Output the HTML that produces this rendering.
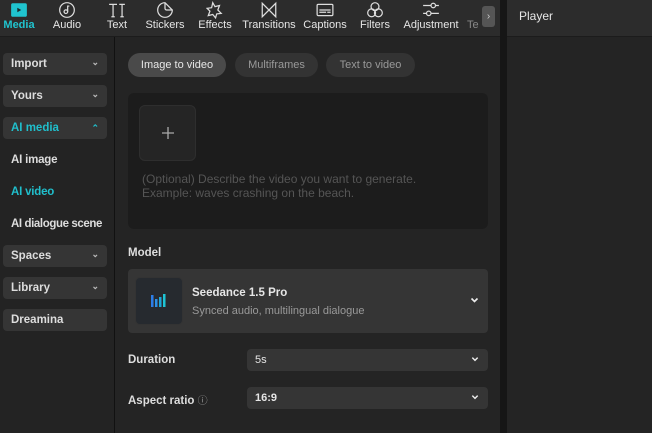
<!DOCTYPE html>
<html><head><style>
*{margin:0;padding:0;box-sizing:border-box}
body{width:652px;height:433px;background:#242424;font-family:"Liberation Sans",sans-serif;position:relative;overflow:hidden;color:#ddd}
.a{position:absolute}
.top{left:0;top:0;width:500px;height:37px;background:#2c2c2c;border-bottom:1px solid #1c1c1c}
.tab{position:absolute;top:0;width:60px;text-align:center;font-size:11px;color:#e6e6e6}
.tab svg{display:block;margin:1px auto 0;width:18px;height:18px}
.tab span{display:block;margin-top:0}
.side{left:0;top:37px;width:115px;height:396px;background:#232323;border-right:1px solid #111}
.sb{position:absolute;left:3px;width:104px;height:22px;background:#353535;border-radius:4px;font-size:11.5px;font-weight:bold;color:#ddd;padding:5px 0 0 8px}
.sb i{position:absolute;right:8px;top:4px;font-style:normal;font-size:9px;color:#bbb}
.st{position:absolute;left:11px;font-size:11.5px;font-weight:bold;color:#ddd;letter-spacing:-0.2px}
.pill{position:absolute;top:53px;height:24px;border-radius:12px;background:#333;font-size:11px;color:#999;text-align:center;line-height:24px}
.sel{position:absolute;left:247px;width:241px;height:22px;background:#353535;border-radius:4px;font-size:11px;color:#e6e6e6;padding:5px 0 0 8px}
.chev{position:absolute;right:9px;top:6px;width:8px;height:8px}
.lbl{position:absolute;left:128px;font-size:11.5px;font-weight:bold;color:#ddd}
</style></head><body>
<div class="a top">
 <div class="tab" style="left:-11px;color:#20c4cf"><svg viewBox="0 0 16 16"><rect x="1" y="2" width="14" height="12" rx="1.5" fill="#20c4cf"/><path d="M6.5 6v4l3.5-2z" fill="#1a2a2c"/></svg><span style="font-weight:bold">Media</span></div>
 <div class="tab" style="left:37px"><svg viewBox="0 0 16 16" fill="none" stroke="#ddd" stroke-width="1.1"><circle cx="8" cy="8" r="6.5"/><circle cx="7" cy="9.5" r="1.6"/><path d="M8.6 9.5V4.5h1.5"/></svg><span>Audio</span></div>
 <div class="tab" style="left:87px"><svg viewBox="0 0 16 16" fill="none" stroke="#ddd" stroke-width="1.1"><path d="M1 3h7M4.5 3v11M3 14h3M10 3h5M12.5 3v11M11 14h3"/></svg><span>Text</span></div>
 <div class="tab" style="left:135px"><svg viewBox="0 0 16 16" fill="none" stroke="#ddd" stroke-width="1.1"><path d="M8 1.5a6.5 6.5 0 1 0 6.5 6.5L8 1.5zM8 1.5v5a1.5 1.5 0 0 0 1.5 1.5h5"/></svg><span>Stickers</span></div>
 <div class="tab" style="left:185px"><svg viewBox="0 0 16 16" fill="none" stroke="#ddd" stroke-width="1.1"><path d="M6 1.5l2 3.5 4-1-1.5 4 3 3-4 .5-1 3.5-2.5-3-4 1 1.5-4L1 6.5l4-.5z"/></svg><span>Effects</span></div>
 <div class="tab" style="left:239px"><svg viewBox="0 0 16 16" fill="none" stroke="#ddd" stroke-width="1.1"><path d="M2 2v12l6-6zM14 2v12L8 8z"/></svg><span>Transitions</span></div>
 <div class="tab" style="left:295px"><svg viewBox="0 0 16 16" fill="none" stroke="#ddd" stroke-width="1.1"><rect x="1" y="3" width="14" height="10" rx="1"/><path d="M3 10h6M10 10h3M3 8h10"/></svg><span>Captions</span></div>
 <div class="tab" style="left:345px"><svg viewBox="0 0 16 16" fill="none" stroke="#ddd" stroke-width="1.1"><circle cx="8" cy="5" r="3.5"/><circle cx="5" cy="10.5" r="3.5"/><circle cx="11" cy="10.5" r="3.5"/></svg><span>Filters</span></div>
 <div class="tab" style="left:401px"><svg viewBox="0 0 16 16" fill="none" stroke="#ddd" stroke-width="1.1"><path d="M1 4h7M12 4h3M1 11h3M8 11h7"/><circle cx="10" cy="4" r="2"/><circle cx="6" cy="11" r="2"/></svg><span>Adjustment</span></div>
 <div class="a" style="left:467px;top:19px;font-size:11px;color:#888">Te</div>
 <div class="a" style="left:482px;top:6px;width:13px;height:21px;background:#555;border-radius:3px;color:#ccc;font-size:10px;text-align:center;line-height:21px">›</div>
</div>
<div class="a" style="left:500px;top:0;width:7px;height:433px;background:#161616"></div>
<div class="a" style="left:507px;top:0;width:145px;height:37px;background:#2c2c2c;border-bottom:1px solid #1c1c1c"><div class="a" style="left:12px;top:9px;font-size:12px;color:#e6e6e6">Player</div></div>
<div class="a side"></div>
<div class="sb" style="top:53px">Import<i>⌄</i></div>
<div class="sb" style="top:85px">Yours<i>⌄</i></div>
<div class="sb" style="top:117px;color:#20bfcc">AI media<i style="color:#20bfcc;top:6px">⌃</i></div>
<div class="st" style="top:154px">AI image</div>
<div class="st" style="top:186px;color:#20bfcc">AI video</div>
<div class="st" style="top:218px;letter-spacing:-0.4px">AI dialogue scene</div>
<div class="sb" style="top:245px">Spaces<i>⌄</i></div>
<div class="sb" style="top:277px">Library<i>⌄</i></div>
<div class="sb" style="top:309px">Dreamina</div>

<div class="pill" style="left:128px;width:98px;background:#4a4a4a;color:#e6e6e6">Image to video</div>
<div class="pill" style="left:235px;width:83px">Multiframes</div>
<div class="pill" style="left:326px;width:89px">Text to video</div>
<div class="a" style="left:128px;top:93px;width:360px;height:136px;background:#1c1c1c;border-radius:6px"></div>
<div class="a" style="left:139px;top:105px;width:57px;height:56px;background:#252525;border:1px solid #2e2e2e;border-radius:6px">
<svg class="a" style="left:21px;top:20px" width="14" height="14" viewBox="0 0 14 14"><path d="M7 1v12M1 7h12" stroke="#aaa" stroke-width="1.3"/></svg></div>
<div class="a" style="left:142px;top:172px;font-size:12px;color:#555;line-height:14px">(Optional) Describe the video you want to generate.<br>Example: waves crashing on the beach.</div>
<div class="lbl" style="top:247px">Model</div>
<div class="a" style="left:128px;top:269px;width:360px;height:64px;background:#353535;border-radius:4px"></div>
<div class="a" style="left:135px;top:277px;width:48px;height:48px;background:#262a2f;border:1px solid #333;border-radius:5px">
<svg class="a" style="left:14px;top:15px" width="20" height="16" viewBox="0 0 20 16"><rect x="1" y="2" width="2.5" height="12" fill="#2d7de6"/><rect x="5" y="6" width="2.5" height="8" fill="#2d8fe6"/><rect x="9" y="4" width="2.5" height="10" fill="#1fa6d8"/><rect x="13" y="1" width="2.5" height="13" fill="#1ec4d4"/></svg></div>
<div class="a" style="left:192px;top:287px;font-size:11.5px;font-weight:bold;color:#e6e6e6">Seedance 1.5 Pro</div>
<div class="a" style="left:192px;top:305px;font-size:11px;color:#999">Synced audio, multilingual dialogue</div>
<svg class="a" style="left:470px;top:296px" width="9" height="8" viewBox="0 0 9 8"><path d="M1.5 2.5l3 3 3-3" fill="none" stroke="#eee" stroke-width="1.6"/></svg>
<div class="lbl" style="top:354px">Duration</div>
<div class="sel" style="top:349px">5s<svg class="chev" viewBox="0 0 9 8"><path d="M1.5 2.5l3 3 3-3" fill="none" stroke="#eee" stroke-width="1.6"/></svg></div>
<div class="lbl" style="top:392px">Aspect ratio <span style="font-weight:normal;color:#999;font-size:10px">ⓘ</span></div>
<div class="sel" style="top:387px;font-weight:bold">16:9<svg class="chev" viewBox="0 0 9 8"><path d="M1.5 2.5l3 3 3-3" fill="none" stroke="#eee" stroke-width="1.6"/></svg></div>
</body></html>
